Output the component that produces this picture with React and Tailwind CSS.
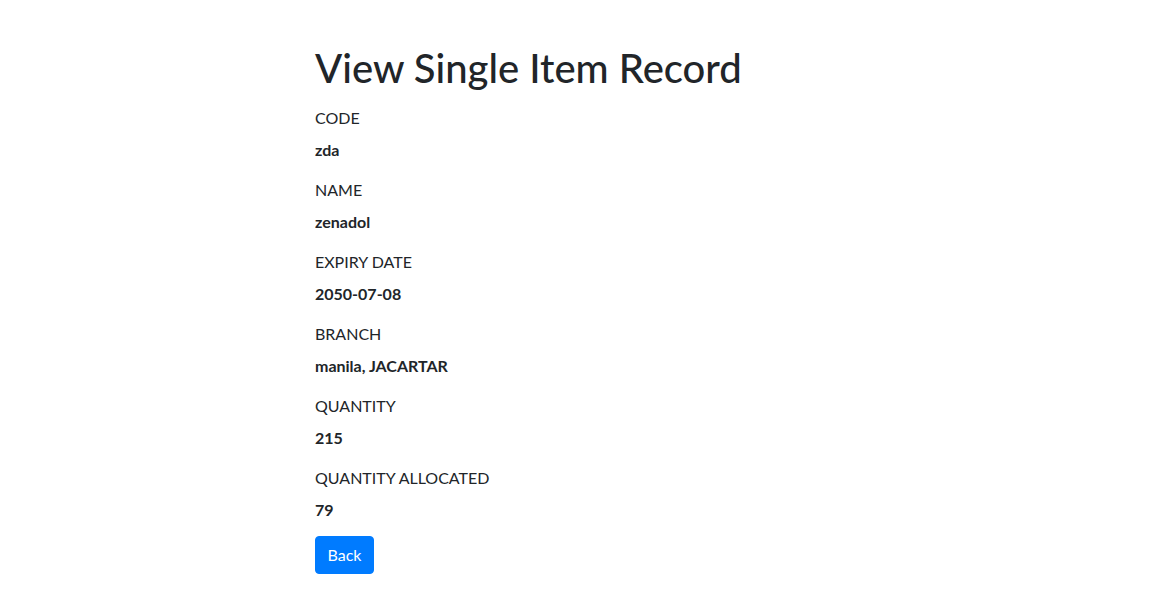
export default function App() {
  const fields = [
    ["CODE", "zda"],
    ["NAME", "zenadol"],
    ["EXPIRY DATE", "2050-07-08"],
    ["BRANCH", "manila, JACARTAR"],
    ["QUANTITY", "215"],
    ["QUANTITY ALLOCATED", "79"],
  ];
  return (
    <div
      className="min-h-screen bg-white text-[#212529]"
      style={{ fontFamily: '"Lato", "Noto Sans", sans-serif' }}
    >
      <div className="pl-[315px] pt-[44px]">
        <h1 className="text-[40px] leading-[48px] font-medium mb-[14px]">View Single Item Record</h1>
        {fields.map(([label, value], i) => (
          <div key={label}>
            <div className="text-[16px] leading-6 mb-2">{label}</div>
            <p className={`text-[16px] leading-6 font-bold ${i === fields.length - 1 ? "mb-[14px]" : "mb-4"}`}>{value}</p>
          </div>
        ))}
        <button className="h-[38px] w-[59px] flex items-center justify-center bg-[#007bff] text-white text-[16px] leading-6 border border-[#007bff] rounded">
          Back
        </button>
      </div>
    </div>
  );
}
